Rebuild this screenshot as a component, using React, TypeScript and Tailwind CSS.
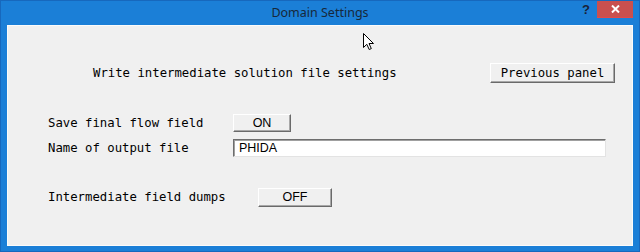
import React from "react";

const mono = { fontFamily: '"DejaVu Sans Mono", "Liberation Mono", monospace' };
const sans = { fontFamily: '"Liberation Sans", Arial, sans-serif' };

function Btn({ w, h, children, monoFont }: { w: string; h: string; children: React.ReactNode; monoFont?: boolean }) {
  return (
    <div
      className={`${w} ${h} flex items-center justify-center bg-[#f0f0f0] border border-t-white border-l-white border-b-[#6a6a6a] border-r-[#6a6a6a] shadow-[inset_-1px_-1px_0_#a8a8a8] text-black ${monoFont ? "text-[12.3px]" : "text-[12.5px]"}`}
      style={monoFont ? mono : sans}
    >
      {children}
    </div>
  );
}

export default function App() {
  return (
    <div className="relative w-[640px] h-[252px] bg-[#1b7fd7] border border-[#1768bd] flex flex-col overflow-hidden">
      {/* Title bar */}
      <div className="h-[24px] grid grid-cols-[1fr_auto_1fr] items-start shrink-0">
        <div />
        <div
          className="pt-[4px] text-[12.5px] leading-[16px] text-[#17283a]"
          style={{ fontFamily: '"Noto Sans", "Open Sans", sans-serif' }}
        >
          Domain Settings
        </div>
        <div className="flex justify-end items-start pr-[6px]">
          <div
            className="mt-[2px] mr-[7px] text-[13px] font-bold leading-[14px] text-[#1a1f36]"
            style={sans}
          >
            ?
          </div>
          <div className="w-[36px] h-[17px] bg-[#c9504f] border-b border-[#e34a4a] flex items-center justify-center">
            <svg width="9" height="8" viewBox="0 0 9 8">
              <path d="M1 0.5 L8 7.5 M8 0.5 L1 7.5" stroke="white" strokeWidth="2" />
            </svg>
          </div>
        </div>
      </div>

      {/* Client area */}
      <div className="mx-[6px] mb-[5px] flex-1 bg-[#f0f0f0] border border-[#fbfbfb] flex flex-col">
        <div className="mt-[37px] h-[20px] flex items-center justify-between pl-[85px] pr-[17px]">
          <span className="text-[12.3px] text-black whitespace-pre" style={mono}>
            Write intermediate solution file settings
          </span>
          <Btn w="w-[125px]" h="h-[20px]" monoFont>
            Previous panel
          </Btn>
        </div>

        <div className="mt-[31px] h-[18px] flex items-center pl-[40px]">
          <span className="w-[185px] text-[12.3px] text-black whitespace-pre" style={mono}>
            Save final flow field
          </span>
          <Btn w="w-[58px]" h="h-[18px]">ON</Btn>
        </div>

        <div className="mt-[7px] h-[18px] flex items-center pl-[40px]">
          <span className="w-[185px] text-[12.3px] text-black whitespace-pre" style={mono}>
            Name of output file
          </span>
          <div
            className="w-[373px] h-[18px] bg-white border border-t-[#6d6d6d] border-l-[#6d6d6d] border-b-[#e3e3e3] border-r-[#e3e3e3] shadow-[inset_1px_1px_0_#a0a0a0] flex items-center pl-[5px] text-[12.5px] text-black"
            style={sans}
          >
            PHIDA
          </div>
        </div>

        <div className="mt-[31px] h-[19px] flex items-center pl-[40px]">
          <span className="w-[210px] text-[12.3px] text-black whitespace-pre" style={mono}>
            Intermediate field dumps
          </span>
          <Btn w="w-[74px]" h="h-[19px]">OFF</Btn>
        </div>
      </div>

      {/* Mouse cursor overlay */}
      <svg className="absolute left-[362px] top-[32px]" width="12" height="18" viewBox="0 0 12 18">
        <path
          d="M0.5 0.5 L0.5 14.5 L3.8 11.3 L6.2 16.5 L8.3 15.6 L6 10.5 L10.5 10.5 Z"
          fill="white"
          stroke="black"
          strokeWidth="1"
          strokeLinejoin="miter"
        />
      </svg>
    </div>
  );
}
